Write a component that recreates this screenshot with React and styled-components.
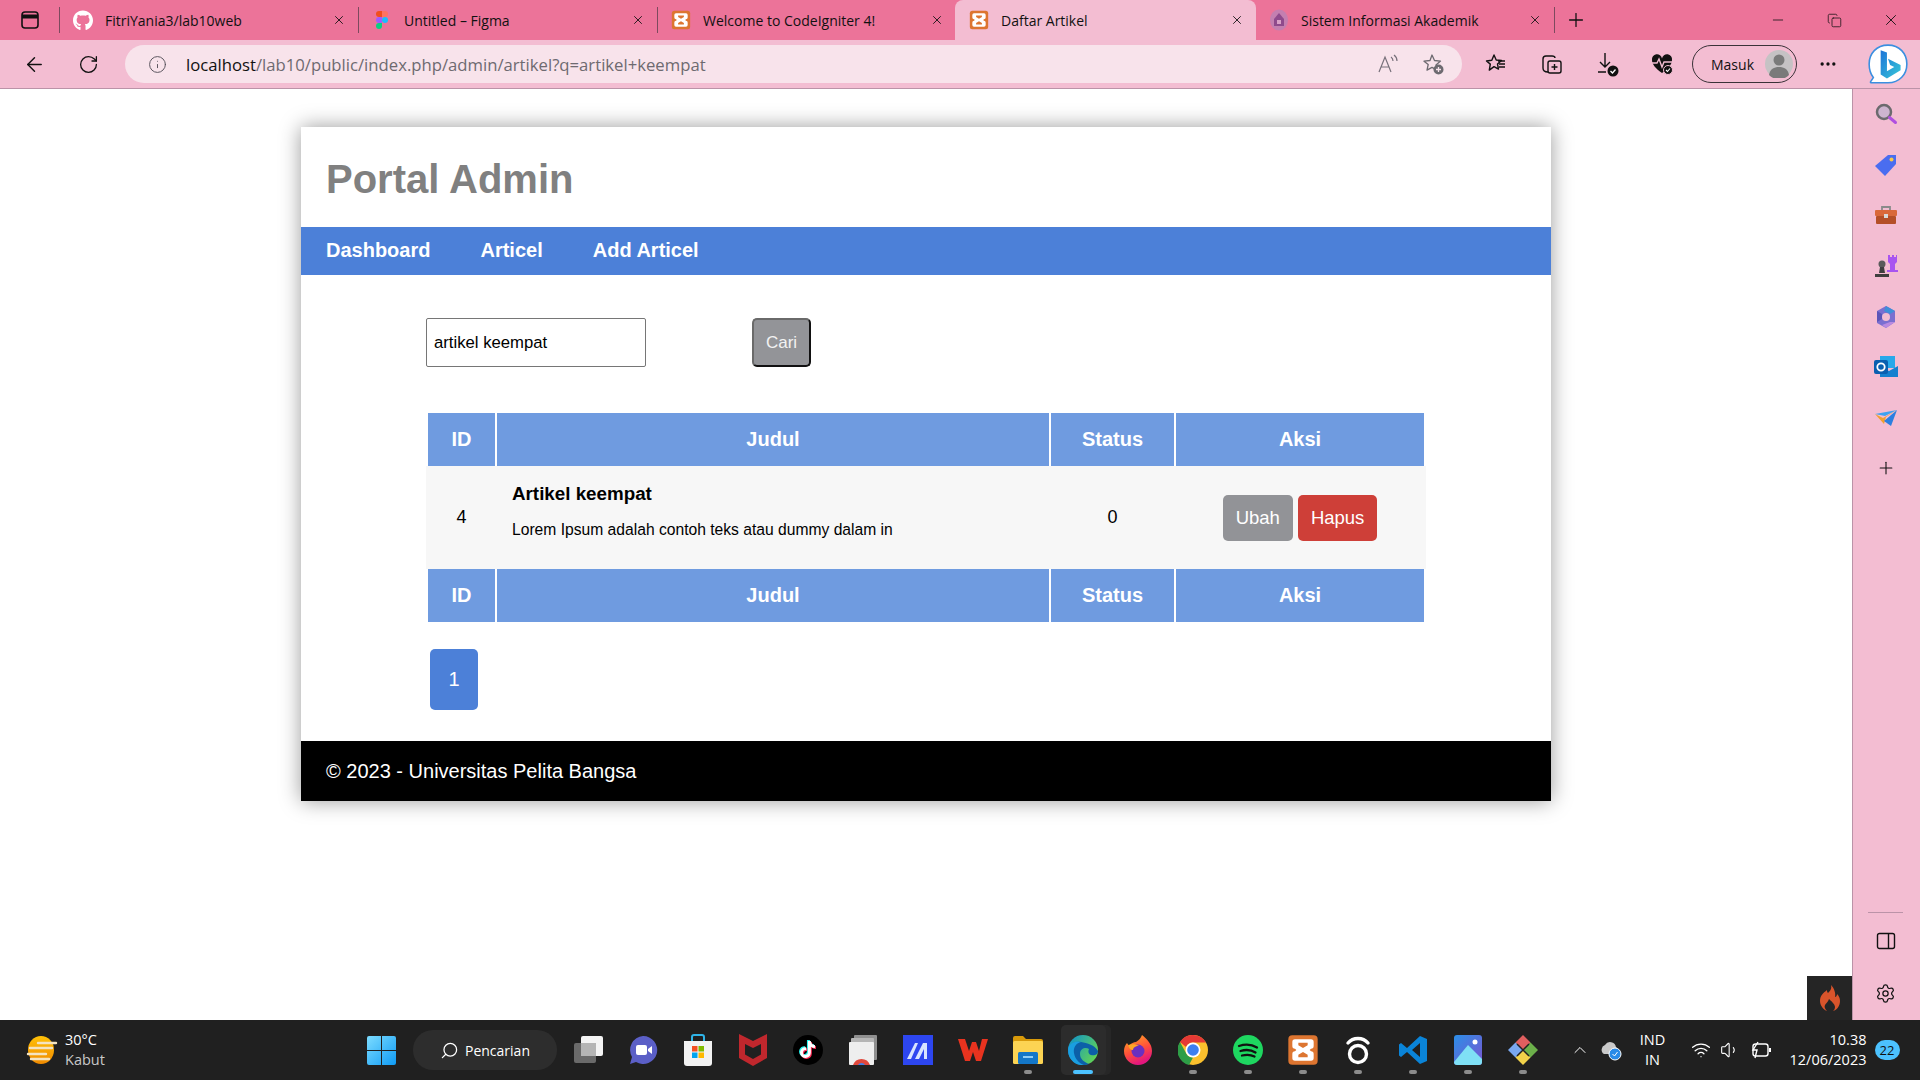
import React from 'react';
import styled, { createGlobalStyle } from 'styled-components';
import {
  ArrowLeft, RotateCw, Info, Plus, Minus, X, Search, ChevronUp, Wifi, Volume1, MoreHorizontal,
  Settings, Copy,
} from 'lucide-react';
import { FaGithub, FaTiktok } from 'react-icons/fa';

const GlobalStyle = createGlobalStyle`
  html, body { margin: 0; padding: 0; height: 100%; overflow: hidden; background: #fff; }
  * { box-sizing: border-box; }
`;

const UI_FONT = `"Open Sans", "Noto Sans", sans-serif`;
const PAGE_FONT = `"Liberation Sans", Arial, sans-serif`;

/* drawn icons */
const Xampp = ({ size = 20 }) => (
  <svg width={size} height={size} viewBox="0 0 24 24">
    <rect x="1" y="1" width="22" height="22" rx="3" fill="#dd7530" />
    <path
      d="M6 4h12a2 2 0 0 1 2 2v3a2 2 0 0 1-2 2l-1 1 1 1a2 2 0 0 1 2 2v3a2 2 0 0 1-2 2H6a2 2 0 0 1-2-2v-3a2 2 0 0 1 2-2l1-1-1-1a2 2 0 0 1-2-2V6a2 2 0 0 1 2-2zM8.500 6.500v2l3.500 2 3.500-2v-2zM8.500 17.500h7v-2l-3.500-2-3.500 2z"
      fill="#fff"
      fillRule="evenodd"
    />
  </svg>
);

const Figma = () => (
  <svg width="12" height="18" viewBox="0 0 16 24">
    <path d="M4 0h4v8H4a4 4 0 0 1 0-8z" fill="#f24e1e" />
    <path d="M8 0h4a4 4 0 0 1 0 8H8z" fill="#ff7262" />
    <path d="M4 8h4v8H4a4 4 0 0 1 0-8z" fill="#a259ff" />
    <circle cx="12" cy="12" r="4" fill="#1abcfe" />
    <path d="M4 16h4v4a4 4 0 1 1-4-4z" fill="#0acf83" />
  </svg>
);

const Campus = () => (
  <svg width="20" height="22" viewBox="0 0 20 22">
    <ellipse cx="10" cy="11" rx="9" ry="10.5" fill="#c47fb0" />
    <path d="M10 4l5 6v7H5v-7z" fill="#8f4a8c" />
    <rect x="8" y="11" width="4" height="4" fill="#d8a0c6" />
  </svg>
);

const SidebarToggle = () => (
  <svg width="20" height="20" viewBox="0 0 20 20" fill="none" stroke="#111" strokeWidth="1.6">
    <rect x="2" y="2" width="16" height="16" rx="3" />
    <path d="M2 6.5h16" strokeWidth="4" />
  </svg>
);

const ReadAloud = () => (
  <svg width="22" height="22" viewBox="0 0 22 22" fill="none" stroke="#77707a" strokeWidth="1.2">
    <path d="M2 19L8 4l6 15M4.5 14h7" />
    <path d="M14 4c1.5 1 2 2.5 2 4M17 2c2 1.5 3 3.5 3 6" />
  </svg>
);

const StarPlus = () => (
  <svg width="24" height="24" viewBox="0 0 24 24" fill="none">
    <path d="M11 3l2.5 5.5 6 .6-4.5 4 1 5-5-2.7-5 2.7 1.2-5.6L3 9.2l6-.7z" stroke="#6d6a70" strokeWidth="1.3" strokeLinejoin="round" />
    <circle cx="17.5" cy="17.5" r="5" fill="#6d6a70" />
    <path d="M17.5 15v5M15 17.5h5" stroke="#f8e3eb" strokeWidth="1.3" />
  </svg>
);

const FavList = () => (
  <svg width="24" height="24" viewBox="0 0 24 24" fill="none" stroke="#111" strokeWidth="1.4" strokeLinejoin="round">
    <path d="M10 3l2.2 5 5.3.5-4 3.6 1 5-4.5-2.5-4.7 3.5 1-6L2.500 9l5.300-.8z" />
    <path d="M15 12h6M15 15h6M14 9h7" />
  </svg>
);

const Collections = () => (
  <svg width="24" height="24" viewBox="0 0 24 24" fill="none" stroke="#111" strokeWidth="1.4">
    <path d="M9 20c-3 0-5-1-5-4V7c0-2 1-3 3-3h6c2 0 3 1 3 2" />
    <rect x="9" y="9" width="13" height="12" rx="2" />
    <path d="M15.500 12v6M12.500 15h6" />
  </svg>
);

const DownloadDone = () => (
  <svg width="24" height="26" viewBox="0 0 24 26" fill="none" stroke="#111" strokeWidth="1.4">
    <path d="M10 2v14M5 11l5 5 5-5M3 21h8" />
    <circle cx="18" cy="20" r="5.500" fill="#111" stroke="none" />
    <path d="M15.500 20l2 2 3-3.500" stroke="#fff" strokeWidth="1.300" />
  </svg>
);

const HeartCheck = () => (
  <svg width="24" height="24" viewBox="0 0 24 24" fill="none">
    <path d="M12 21C5 16 2 12 2 8a5 5 0 0 1 10-1.500A5 5 0 0 1 22 8c0 4-3 8-10 13z" fill="#111" />
    <path d="M1 11h6l2-4 3 8 2-5h9" stroke="#f3bdd2" strokeWidth="1.400" />
    <circle cx="18" cy="18" r="4.500" fill="#111" stroke="#f3bdd2" />
    <path d="M16 18l1.500 1.500 2.500-3" stroke="#fff" strokeWidth="1.100" />
  </svg>
);

const Avatar = () => (
  <svg width="28" height="28" viewBox="0 0 28 28">
    <circle cx="14" cy="14" r="14" fill="#c5c2c4" />
    <circle cx="14" cy="10" r="5.500" fill="#7a7a7a" />
    <path d="M4 25c1-6 5-8 10-8s9 2 10 8a14 14 0 0 1-20 0z" fill="#7a7a7a" />
  </svg>
);

const BingBubble = () => (
  <svg width="42" height="44" viewBox="0 0 40 42">
    <defs>
      <linearGradient id="bingG" x1="0" y1="0" x2="1" y2="1">
        <stop offset="0" stopColor="#1c74d8" />
        <stop offset="1" stopColor="#37c8d8" />
      </linearGradient>
    </defs>
    <path d="M20 2c11 0 18 8 18 18s-7 18-18 18H4c-1 0-1-1 0-2l2-3C3 29 2 25 2 20 2 10 9 2 20 2z" fill="#fff" stroke="#3b8fe0" strokeWidth="1.500" />
    <path d="M13 7l6 2v18l7-4-4-2-2-6 12 6v5l-13 8-6-4z" fill="url(#bingG)" />
  </svg>
);

const SideSearch = () => (
  <svg width="24" height="24" viewBox="0 0 24 24" fill="none">
    <circle cx="10" cy="10" r="7" fill="#cdb4cf" stroke="#6c6a6e" strokeWidth="2.500" />
    <path d="M15.500 15.500l6 5" stroke="#b04fe0" strokeWidth="3" strokeLinecap="round" />
  </svg>
);

const Tag = () => (
  <svg width="24" height="24" viewBox="0 0 24 24">
    <path d="M14 2h8v9L11 23 1 13z" fill="#4a6df0" />
    <circle cx="17.500" cy="6.500" r="2" fill="#f4c94a" />
  </svg>
);

const Toolbox = () => (
  <svg width="24" height="24" viewBox="0 0 24 24">
    <path d="M8 8V4h8v4" fill="none" stroke="#8a8a8a" strokeWidth="1.800" />
    <rect x="1" y="7" width="22" height="6" rx="1" fill="#d9683a" />
    <rect x="2" y="13" width="20" height="8" rx="1" fill="#b44f28" />
    <rect x="10" y="11" width="4" height="4" fill="#d8d8d8" />
  </svg>
);

const Chess = () => (
  <svg width="24" height="24" viewBox="0 0 24 24">
    <path d="M14 1h2v2h2V1h2v2h2V1h1v7l-2 2v6h3v2H13v-2h3v-6l-2-2z" fill="#a855f0" />
    <circle cx="8" cy="10" r="3.500" fill="#5a5a5a" />
    <path d="M6 13h4l1 6H5zM1 20h14v3H1z" fill="#3f3f3f" />
  </svg>
);

const M365 = () => (
  <svg width="22" height="24" viewBox="0 0 22 24">
    <path d="M11 1l9 5v11l-9 6-9-5V6z" fill="#7a6fd0" />
    <path d="M11 1l9 5-5 3-6-3z" fill="#3f8fd8" />
    <path d="M2 6v11l5-3V9z" fill="#5a55b8" />
    <path d="M20 17l-9 6-4-3 8-3z" fill="#b98ae0" />
    <circle cx="11" cy="12" r="4" fill="#f3bdd2" />
  </svg>
);

const Outlook = () => (
  <svg width="24" height="24" viewBox="0 0 24 24">
    <rect x="6" y="1" width="15" height="12" fill="#28a8ea" />
    <path d="M6 12l9 4 9-5v11H6z" fill="#1480cf" />
    <rect x="0" y="5" width="14" height="14" rx="2" fill="#0a5fb0" />
    <circle cx="7" cy="12" r="3.700" fill="none" stroke="#fff" strokeWidth="1.800" />
  </svg>
);

const PaperPlane = () => (
  <svg width="24" height="20" viewBox="0 0 24 20">
    <path d="M1 6l22-4-12 6z" fill="#3fa2f0" />
    <path d="M1 6l8 4 14-8-11 7-2 7z" fill="#f0a030" />
    <path d="M23 2l-6 16-7-5z" fill="#2b7fe0" />
  </svg>
);

const PanelIcon = () => (
  <svg width="20" height="18" viewBox="0 0 20 18" fill="none" stroke="#111" strokeWidth="1.400">
    <rect x="1.500" y="1.500" width="17" height="15" rx="2" />
    <path d="M12.500 1.500v15" />
  </svg>
);

const Flame = () => (
  <svg width="22" height="26" viewBox="0 0 22 26">
    <path d="M12 0c1 4-1 6-3 8-1-1-1-2-1-3C4 8 1 11 1 16c0 5 4 9 7 10-2-2-3-4-2-6 1-2 3-3 4-6 2 2 6 5 6 8 0 2-1 3-2 4 4-1 7-5 7-10 0-3-1-5-3-7 0 2-1 3-2 3 1-4-1-9-4-12z" fill="#d9542b" />
  </svg>
);

const WeatherIcon = () => (
  <svg width="34" height="30" viewBox="0 0 34 30">
    <defs>
      <linearGradient id="sunG" x1="0" y1="0" x2="0" y2="1">
        <stop offset="0" stopColor="#ffc107" />
        <stop offset="1" stopColor="#f08a00" />
      </linearGradient>
    </defs>
    <ellipse cx="17" cy="15" rx="13" ry="14" fill="url(#sunG)" />
    <path d="M14 8h18M6 13h22M4 19h18M7 24h18" stroke="#f4e3c0" strokeWidth="2.400" strokeLinecap="round" />
  </svg>
);

const WinLogo = () => (
  <svg width="29" height="29" viewBox="0 0 29 29">
    <defs>
      <linearGradient id="winG" x1="0" y1="0" x2="1" y2="1">
        <stop offset="0" stopColor="#7ddcff" />
        <stop offset="1" stopColor="#0f9bf5" />
      </linearGradient>
    </defs>
    <path d="M0 2a2 2 0 0 1 2-2h12v14H0zM15 0h12a2 2 0 0 1 2 2v12H15zM0 15h14v14H2a2 2 0 0 1-2-2zM15 15h14v12a2 2 0 0 1-2 2H15z" fill="url(#winG)" />
  </svg>
);

const TaskView = () => (
  <svg width="30" height="30" viewBox="0 0 30 30">
    <rect x="1" y="8" width="22" height="20" rx="2" fill="#6a6a6a" />
    <rect x="8" y="1" width="22" height="20" rx="2" fill="#f4f4f4" />
    <rect x="8" y="8" width="15" height="13" fill="#b5b5b5" />
  </svg>
);

const Meet = () => (
  <svg width="30" height="30" viewBox="0 0 30 30">
    <path d="M15 1a14 14 0 1 1-7 26l-6 2 2-7A14 14 0 0 1 15 1z" fill="#5b5fc7" />
    <rect x="8" y="10" width="11" height="10" rx="2" fill="#fff" />
    <path d="M20 14l4-3v8l-4-3z" fill="#fff" />
  </svg>
);

const Store = () => (
  <svg width="30" height="32" viewBox="0 0 30 32">
    <path d="M9 7V3a2 2 0 0 1 2-2h8a2 2 0 0 1 2 2v4" fill="none" stroke="#2fb4e8" strokeWidth="2" />
    <path d="M1 7h28v22a3 3 0 0 1-3 3H4a3 3 0 0 1-3-3z" fill="#f2f2f2" />
    <rect x="9" y="12" width="5.500" height="5.500" fill="#f25022" />
    <rect x="15.500" y="12" width="5.500" height="5.500" fill="#7fba00" />
    <rect x="9" y="18.500" width="5.500" height="5.500" fill="#00a4ef" />
    <rect x="15.500" y="18.500" width="5.500" height="5.500" fill="#ffb900" />
  </svg>
);

const McAfee = () => (
  <svg width="28" height="32" viewBox="0 0 28 32">
    <path d="M0 0l14 7 14-7v24l-14 8L0 24zM6 10v10.500l8 4.500 8-4.500V10l-8 4z" fill="#c0272d" fillRule="evenodd" />
  </svg>
);

const TikTok = () => (
  <Disc>
    <TikLayer $color="#25f4ee" $x={-1} $y={-1}><FaTiktok size={17} /></TikLayer>
    <TikLayer $color="#fe2c55" $x={1} $y={1}><FaTiktok size={17} /></TikLayer>
    <TikLayer $color="#fff" $x={0} $y={0}><FaTiktok size={17} /></TikLayer>
  </Disc>
);

const ChromeApps = () => (
  <svg width="30" height="32" viewBox="0 0 30 32">
    <rect x="6" y="1" width="23" height="25" rx="1" fill="#8f8f8f" />
    <rect x="3" y="4" width="23" height="25" rx="1" fill="#b5b5b5" />
    <rect x="1" y="8" width="25" height="23" rx="1" fill="#eee" />
    <path d="M5 31a9 9 0 0 1 17 0z" fill="#e0483c" />
    <path d="M10 31a4 4 0 0 1 7 0z" fill="#3f80e8" />
  </svg>
);

const BlueM = () => (
  <svg width="30" height="30" viewBox="0 0 30 30">
    <rect width="30" height="30" fill="#2d46f0" />
    <path d="M4 24L12 8h3L8 24zM12 24l8-16h4v16h-3V14l-5 10z" fill="#d8e4ff" />
  </svg>
);

const Wps = () => (
  <svg width="30" height="26" viewBox="0 0 30 26">
    <path d="M0 2h7l4 12 3-9h4l3 9 3-12h6l-7 22h-5l-3-9-3 9h-5z" fill="#e8331f" />
  </svg>
);

const Folder = () => (
  <svg width="30" height="28" viewBox="0 0 30 28">
    <path d="M0 2a2 2 0 0 1 2-2h8l3 3h15a2 2 0 0 1 2 2v3H0z" fill="#d89a0a" />
    <rect y="5" width="30" height="23" rx="1.500" fill="#fcd453" />
    <rect x="5" y="16" width="20" height="12" rx="1.500" fill="#1477c8" />
    <rect x="10" y="20" width="10" height="2" fill="#8fcdf5" />
  </svg>
);

const Edge = () => (
  <svg width="30" height="30" viewBox="0 0 30 30">
    <defs>
      <linearGradient id="edgeG" x1="0" y1="0" x2="1" y2="0.6">
        <stop offset="0" stopColor="#0c8fd0" />
        <stop offset="1" stopColor="#5fd158" />
      </linearGradient>
    </defs>
    <circle cx="15" cy="15" r="15" fill="url(#edgeG)" />
    <path d="M30 16c0 4-4 5-7 4-3-1-3-4-2-6-3-2-9-1-9 5 0 5 4 8 9 10a15 15 0 0 1-9 1C5 28 0 22 0 15 2 8 8 6 13 7c6 1 14 3 17 9z" fill="#0c5fa8" />
    <path d="M0 15C0 9 7 5 13 7c-5 1-8 6-7 11 1 6 5 10 10 12C7 31 0 24 0 15z" fill="#1a9ee0" />
  </svg>
);

const Firefox = () => (
  <svg width="30" height="30" viewBox="0 0 30 30">
    <defs>
      <linearGradient id="ffG" x1="0" y1="0" x2="0.4" y2="1">
        <stop offset="0" stopColor="#ffb022" />
        <stop offset="0.6" stopColor="#ff4f3a" />
        <stop offset="1" stopColor="#e3167f" />
      </linearGradient>
    </defs>
    <path d="M15 30A14 14 0 0 1 1 16c0-3 1-6 3-8l2 3c2-3 5-4 7-4 3-2 5-4 6-7 5 4 10 9 10 16a14 14 0 0 1-14 14z" fill="url(#ffG)" />
    <circle cx="15" cy="16" r="6.500" fill="#6b2fc0" />
    <path d="M5 10c3-1 8-1 11 1-4 0-6 2-6 4-3 0-4-2-5-5z" fill="#ffa726" />
  </svg>
);

const Chrome = () => (
  <svg width="30" height="30" viewBox="0 0 30 30">
    <circle cx="15" cy="15" r="15" fill="#fbc02d" />
    <path d="M15 0a15 15 0 0 1 13 7.500H15a7.500 7.500 0 0 0-7 4.500L2 7A15 15 0 0 1 15 0z" fill="#e53935" />
    <path d="M2 7l6.500 12a7.500 7.500 0 0 0 6.500 3.500L11 30A15 15 0 0 1 2 7z" fill="#2e9e47" />
    <circle cx="15" cy="15" r="7.500" fill="#fff" />
    <circle cx="15" cy="15" r="5.800" fill="#3d7ff0" />
  </svg>
);

const Spotify = () => (
  <svg width="30" height="30" viewBox="0 0 30 30" fill="none">
    <circle cx="15" cy="15" r="15" fill="#1ed760" />
    <path d="M6 11c6-2 13-1.500 18 1.500M7.500 16c5-1.500 11-1 15 1.500M9 20.500c4-1 9-.8 12.500 1" stroke="#111" strokeWidth="2.300" strokeLinecap="round" />
  </svg>
);

const Copilot = () => (
  <svg width="26" height="30" viewBox="0 0 26 30" fill="none" stroke="#fff" strokeWidth="3.400">
    <circle cx="13" cy="19" r="8.500" />
    <path d="M3 8c5-6 15-6 20 0" strokeLinecap="round" />
  </svg>
);

const VsCode = () => (
  <svg width="30" height="30" viewBox="0 0 30 30">
    <path d="M22 1l7 3v22l-7 3L9 17l-6 5-2-1.500v-11L3 8l6 5zm0 7l-8 7 8 7z" fill="#0a84d8" fillRule="evenodd" />
  </svg>
);

const Photos = () => (
  <svg width="28" height="30" viewBox="0 0 28 30">
    <defs>
      <linearGradient id="phG" x1="0" y1="0" x2="1" y2="1">
        <stop offset="0" stopColor="#2b8fe8" />
        <stop offset="1" stopColor="#7a55d0" />
      </linearGradient>
    </defs>
    <rect width="28" height="30" rx="3" fill="url(#phG)" />
    <path d="M0 27L14 10l14 14v3a3 3 0 0 1-3 3H3a3 3 0 0 1-3-3z" fill="#7fe0f5" />
    <circle cx="21" cy="7" r="2.500" fill="#fff" />
  </svg>
);

const GitGui = () => (
  <svg width="30" height="30" viewBox="0 0 30 30">
    <path d="M15 0l7.500 7.500L15 15 7.500 7.500z" fill="#e05f5f" />
    <path d="M22.500 7.500L30 15l-7.500 7.500L15 15z" fill="#6cb04a" />
    <path d="M7.500 7.500L15 15l-7.500 7.500L0 15z" fill="#7aa8f0" />
    <path d="M15 15l7.500 7.500L15 30l-7.500-7.500z" fill="#f2d24a" />
    <path d="M9 9l12 12M21 9L9 21" stroke="#222" strokeWidth="1.500" />
  </svg>
);

const CloudSync = () => (
  <svg width="24" height="22" viewBox="0 0 24 22">
    <path d="M5 15a5 5 0 0 1 1-9 6 6 0 0 1 11 2 4 4 0 0 1 0 7z" fill="#c9c9c9" />
    <circle cx="16" cy="15" r="6" fill="#2a8be8" stroke="#fff" />
    <path d="M13.500 15l2 2 3-4" stroke="#fff" fill="none" />
  </svg>
);

const Battery = () => (
  <svg width="22" height="18" viewBox="0 0 22 18" fill="none" stroke="#fff" strokeWidth="1.400">
    <rect x="3" y="3" width="15" height="12" rx="2.500" />
    <path d="M20 7v4" strokeWidth="2" />
    <path d="M8 1L3 9h4l-2 8" />
  </svg>
);

/* data */
const tabs = [
  { title: 'FitriYania3/lab10web', icon: <FaGithub size={21} color="#fff" /> },
  { title: 'Untitled – Figma', icon: <Figma /> },
  { title: 'Welcome to CodeIgniter 4!', icon: <Xampp /> },
  { title: 'Daftar Artikel', icon: <Xampp />, active: true },
  { title: 'Sistem Informasi Akademik', icon: <Campus /> },
];

const sideApps = [<SideSearch />, <Tag />, <Toolbox />, <Chess />, <M365 />, <Outlook />, <PaperPlane />];

const taskApps = [
  { icon: <TaskView /> },
  { icon: <Meet /> },
  { icon: <Store /> },
  { icon: <McAfee /> },
  { icon: <TikTok /> },
  { icon: <ChromeApps /> },
  { icon: <BlueM /> },
  { icon: <Wps /> },
  { icon: <Folder />, open: true },
  { icon: <Edge />, active: true },
  { icon: <Firefox /> },
  { icon: <Chrome />, open: true },
  { icon: <Spotify />, open: true },
  { icon: <Xampp size={32} />, open: true },
  { icon: <Copilot />, open: true },
  { icon: <VsCode />, open: true },
  { icon: <Photos />, open: true },
  { icon: <GitGui />, open: true },
];

const columns = ['ID', 'Judul', 'Status', 'Aksi'];

export default function App() {
  const headerRow = (
    <tr>
      {columns.map((c) => <HeadCell key={c}>{c}</HeadCell>)}
    </tr>
  );

  return (
    <Screen>
      <GlobalStyle />
      <TabBar>
        <TabToggle><SidebarToggle /></TabToggle>
        {tabs.map((t) => (
          <Tab key={t.title} $active={t.active}>
            <TabIcon>{t.icon}</TabIcon>
            <TabTitle>{t.title}</TabTitle>
            <X size={14} strokeWidth={1.5} color="#111" />
          </Tab>
        ))}
        <NewTab><Plus size={22} strokeWidth={1.4} color="#111" /></NewTab>
        <WindowControls>
          <Minus size={16} strokeWidth={1.2} color="#111" />
          <Copy size={15} strokeWidth={1.2} color="#111" />
          <X size={18} strokeWidth={1.2} color="#111" />
        </WindowControls>
      </TabBar>

      <Toolbar>
        <NavButton><ArrowLeft size={23} strokeWidth={1.5} color="#111" /></NavButton>
        <NavButton><RotateCw size={21} strokeWidth={1.5} color="#111" /></NavButton>
        <AddressBar>
          <Info size={19} strokeWidth={1.2} color="#55505a" />
          <Url><UrlHost>localhost</UrlHost>/lab10/public/index.php/admin/artikel?q=artikel+keempat</Url>
          <AddressActions>
            <ReadAloud />
            <StarPlus />
          </AddressActions>
        </AddressBar>
        <ToolIcons>
          <FavList />
          <Collections />
          <DownloadDone />
          <HeartCheck />
        </ToolIcons>
        <ProfilePill>
          <span>Masuk</span>
          <Avatar />
        </ProfilePill>
        <MoreButton><MoreHorizontal size={20} strokeWidth={2} color="#111" /></MoreButton>
        <BingSlot><BingBubble /></BingSlot>
      </Toolbar>

      <Body>
        <Page>
          <Container>
            <SiteHeader><h1>Portal Admin</h1></SiteHeader>
            <SiteNav>
              <NavLink href="#">Dashboard</NavLink>
              <NavLink href="#">Articel</NavLink>
              <NavLink href="#">Add Articel</NavLink>
            </SiteNav>
            <Content>
              <SearchForm>
                <SearchInput defaultValue="artikel keempat" />
                <SearchButton type="button">Cari</SearchButton>
              </SearchForm>
              <DataTable>
                <colgroup>
                  <col width="69" />
                  <col width="554" />
                  <col width="125" />
                  <col width="252" />
                </colgroup>
                <thead>{headerRow}</thead>
                <tbody>
                  <tr>
                    <ValueCell>4</ValueCell>
                    <TitleCell>
                      <ArticleTitle>Artikel keempat</ArticleTitle>
                      <ArticleText>Lorem Ipsum adalah contoh teks atau dummy dalam in</ArticleText>
                    </TitleCell>
                    <ValueCell>0</ValueCell>
                    <ActionCell>
                      <ActionGroup>
                        <ActionButton $color="#929397">Ubah</ActionButton>
                        <ActionButton $color="#ce3f38">Hapus</ActionButton>
                      </ActionGroup>
                    </ActionCell>
                  </tr>
                </tbody>
                <tfoot>{headerRow}</tfoot>
              </DataTable>
              <Pager><PageLink>1</PageLink></Pager>
            </Content>
            <SiteFooter>© 2023 - Universitas Pelita Bangsa</SiteFooter>
          </Container>
          <DebugFlame><Flame /></DebugFlame>
        </Page>

        <SidePanel>
          <SideList>
            {sideApps.map((icon, i) => <SideItem key={i}>{icon}</SideItem>)}
            <SideItem><Plus size={20} strokeWidth={1.3} color="#111" /></SideItem>
          </SideList>
          <SideBottom>
            <SideRule />
            <PanelIcon />
            <Settings size={21} strokeWidth={1.4} color="#111" />
          </SideBottom>
        </SidePanel>
      </Body>

      <Taskbar>
        <Weather>
          <WeatherIcon />
          <WeatherText>
            <span>30°C</span>
            <WeatherSub>Kabut</WeatherSub>
          </WeatherText>
        </Weather>
        <StartSlot><WinLogo /></StartSlot>
        <SearchPill>
          <SearchGlyph><Search size={19} strokeWidth={1.6} color="#fff" /></SearchGlyph>
          <span>Pencarian</span>
        </SearchPill>
        <AppStrip>
          {taskApps.map((a, i) => (
            <AppSlot key={i} $active={a.active}>
              {a.icon}
              {a.open && <AppDot />}
              {a.active && <AppBar />}
            </AppSlot>
          ))}
        </AppStrip>
        <Tray>
          <ChevronUp size={20} strokeWidth={1.2} color="#fff" />
          <CloudWrap><CloudSync /></CloudWrap>
          <LangBox>
            <span>IND</span>
            <span>IN</span>
          </LangBox>
          <TrayIcons>
            <Wifi size={20} strokeWidth={1.6} color="#fff" />
            <Volume1 size={20} strokeWidth={1.3} color="#fff" />
            <Battery />
          </TrayIcons>
          <Clock>
            <span>10.38</span>
            <span>12/06/2023</span>
          </Clock>
          <NotifyBadge>22</NotifyBadge>
        </Tray>
      </Taskbar>
    </Screen>
  );
}

const Screen = styled.div`
  width: 1920px;
  height: 1080px;
  display: flex;
  flex-direction: column;
  overflow: hidden;
  font-family: ${UI_FONT};
`;

/* tab strip */
const TabBar = styled.div`
  height: 40px;
  flex-shrink: 0;
  display: flex;
  align-items: stretch;
  background: #ec7399;
  font-size: 14px;
  color: #111;
`;

const TabToggle = styled.div`
  width: 60px;
  padding-left: 20px;
  display: flex;
  align-items: center;
  border-right: 1px solid #7d4a5e;
  margin: 7px 0;
`;

const Tab = styled.div`
  width: ${(p) => (p.$active ? '301px' : '299px')};
  margin: ${(p) => (p.$active ? '0 0 0 -2px' : '7px 0')};
  display: flex;
  align-items: center;
  padding: 0 12px 0 ${(p) => (p.$active ? '14px' : '13px')};
  background: ${(p) => (p.$active ? '#f3bdd2' : 'transparent')};
  border-radius: ${(p) => (p.$active ? '8px 8px 0 0' : '0')};
  border-right: ${(p) => (p.$active ? 'none' : '1px solid #7d4a5e')};
`;

const TabIcon = styled.div`
  width: 20px;
  height: 24px;
  display: flex;
  align-items: center;
  justify-content: center;
  margin-right: 12px;
`;

const TabTitle = styled.div`
  flex: 1;
  white-space: nowrap;
  overflow: hidden;
`;

const NewTab = styled.div`
  width: 42px;
  display: flex;
  align-items: center;
  justify-content: center;
`;

const WindowControls = styled.div`
  margin-left: auto;
  width: 170px;
  padding: 0 20px 0 20px;
  display: flex;
  align-items: center;
  justify-content: space-between;
`;

/* browser toolbar */
const Toolbar = styled.div`
  height: 49px;
  flex-shrink: 0;
  display: flex;
  align-items: center;
  background: #f3bdd2;
  border-bottom: 1px solid #bb93a8;
  padding-left: 23px;
`;

const NavButton = styled.div`
  width: 55px;
  display: flex;
  align-items: center;
`;

const AddressBar = styled.div`
  width: 1337px;
  height: 38px;
  margin-left: -8px;
  border-radius: 19px;
  background: #f8e3eb;
  display: flex;
  align-items: center;
  padding-left: 23px;
`;

const Url = styled.div`
  margin-left: 19px;
  font-size: 16.700px;
  color: #6e6a70;
  white-space: nowrap;
`;

const UrlHost = styled.span`
  color: #111;
`;

const AddressActions = styled.div`
  margin-left: auto;
  width: 85px;
  padding-right: 17px;
  display: flex;
  justify-content: space-between;
  align-items: center;
`;

const ToolIcons = styled.div`
  width: 232px;
  padding: 0 20px 0 22px;
  display: flex;
  justify-content: space-between;
  align-items: center;
`;

const ProfilePill = styled.div`
  width: 105px;
  height: 38px;
  margin-left: -2px;
  border: 1.500px solid #3a3238;
  border-radius: 19px;
  display: flex;
  align-items: center;
  justify-content: space-between;
  padding: 0 3px 0 18px;
  font-size: 14px;
  color: #111;
`;

const MoreButton = styled.div`
  width: 62px;
  display: flex;
  justify-content: center;
`;

const BingSlot = styled.div`
  width: 42px;
  height: 44px;
  margin-left: 8px;
  margin-top: 2px;
`;

/* page */
const Body = styled.div`
  flex: 1;
  min-height: 0;
  display: flex;
`;

const Page = styled.div`
  position: relative;
  flex: 1;
  background: #fff;
  padding-top: 38px;
  border-right: 1px solid #bb93a8;
`;

const Container = styled.div`
  width: 1250px;
  margin: 0 auto;
  background: #fff;
  box-shadow: 0 0 20px rgba(0, 0, 0, 0.4);
  font-family: ${PAGE_FONT};
`;

const SiteHeader = styled.header`
  height: 100px;
  padding: 31px 25px 0;
  h1 {
    margin: 0;
    font-size: 40px;
    line-height: 42px;
    color: #808080;
    font-weight: bold;
  }
`;

const SiteNav = styled.nav`
  height: 48px;
  padding-bottom: 2px;
  display: flex;
  align-items: center;
  background: #4c80d8;
`;

const NavLink = styled.a`
  padding: 0 25px;
  color: #fff;
  font-size: 20px;
  font-weight: bold;
  text-decoration: none;
`;

const Content = styled.main`
  padding: 43px 0 31px 125px;
`;

const SearchForm = styled.form`
  display: flex;
  gap: 106px;
  margin: 0 0 46px;
`;

const SearchInput = styled.input`
  width: 220px;
  height: 49px;
  padding: 0 7px;
  border: 1px solid #767676;
  border-radius: 2px;
  font-family: ${PAGE_FONT};
  font-size: 16.700px;
  color: #000;
  background: #fff;
`;

const SearchButton = styled.button`
  width: 59px;
  height: 49px;
  padding: 0;
  background: #939498;
  border: 2px solid;
  border-color: #6a6a6a #111 #111 #6a6a6a;
  border-radius: 5px;
  color: #f2f2f2;
  font-family: ${PAGE_FONT};
  font-size: 17px;
`;

const DataTable = styled.table`
  width: 1000px;
  table-layout: fixed;
  border-collapse: separate;
  border-spacing: 0;
  background: #f7f7f7;
`;

const HeadCell = styled.th`
  height: 53px;
  padding: 0;
  background: #6f9be0;
  background-clip: padding-box;
  border-left: 2px solid #fff;
  color: #fff;
  font-size: 20px;
  font-weight: bold;
  text-align: center;
  &:last-child { border-right: 2px solid #fff; }
`;

const ValueCell = styled.td`
  padding: 0 0 0 2px;
  height: 103px;
  text-align: center;
  font-size: 18px;
  color: #000;
`;

const ActionCell = styled.td`
  padding: 0;
  text-align: center;
`;

const TitleCell = styled.td`
  padding: 17px 17px 0;
  vertical-align: top;
`;

const ArticleTitle = styled.h3`
  margin: 0;
  font-size: 18.800px;
  line-height: 22px;
  color: #000;
`;

const ArticleText = styled.p`
  margin: 16px 0 0;
  font-size: 15.650px;
  line-height: 18px;
  color: #000;
`;

const ActionGroup = styled.div`
  display: inline-flex;
  gap: 5px;
  vertical-align: middle;
`;

const ActionButton = styled.a`
  height: 46px;
  padding: 0 13px;
  display: flex;
  align-items: center;
  border-radius: 5px;
  background: ${(p) => p.$color};
  color: #fff;
  font-size: 18.500px;
`;

const Pager = styled.div`
  margin: 27px 0 0 4px;
  display: flex;
`;

const PageLink = styled.a`
  width: 48px;
  height: 61px;
  display: flex;
  align-items: center;
  justify-content: center;
  border-radius: 5px;
  background: #4c80d8;
  color: #fff;
  font-size: 20px;
`;

const SiteFooter = styled.footer`
  height: 60px;
  padding: 0 25px;
  display: flex;
  align-items: center;
  background: #000;
  color: #fff;
  font-size: 20px;
`;

const DebugFlame = styled.div`
  position: absolute;
  right: 0;
  bottom: 0;
  width: 45px;
  height: 44px;
  display: flex;
  align-items: center;
  justify-content: center;
  background: #252525;
`;

/* right sidebar */
const SidePanel = styled.aside`
  width: 67px;
  flex-shrink: 0;
  padding-right: 2px;
  background: #f3bdd2;
  display: flex;
  flex-direction: column;
  justify-content: space-between;
`;

const SideList = styled.div`
  display: flex;
  flex-direction: column;
`;

const SideItem = styled.div`
  height: 50.600px;
  display: flex;
  align-items: center;
  justify-content: center;
`;

const SideBottom = styled.div`
  display: flex;
  flex-direction: column;
  align-items: center;
  padding-bottom: 16px;
  gap: 33px;
`;

const SideRule = styled.div`
  width: 35px;
  height: 1px;
  margin-bottom: -14px;
  background: #bb93a8;
`;

/* windows taskbar */
const Taskbar = styled.div`
  height: 60px;
  flex-shrink: 0;
  display: flex;
  align-items: center;
  background: #202020;
  color: #fff;
  font-size: 14px;
`;

const Weather = styled.div`
  width: 353px;
  padding-left: 24px;
  display: flex;
  align-items: center;
  gap: 7px;
`;

const WeatherText = styled.div`
  display: flex;
  flex-direction: column;
  line-height: 20px;
  font-size: 14.500px;
`;

const WeatherSub = styled.span`
  color: #c8c8c8;
`;

const StartSlot = styled.div`
  width: 60px;
  display: flex;
  justify-content: center;
  margin-left: -2px;
`;

const SearchPill = styled.div`
  width: 144px;
  height: 40px;
  margin-left: 2px;
  border-radius: 20px;
  background: #2d2d2d;
  display: flex;
  align-items: center;
  justify-content: center;
  gap: 6px;
`;

const SearchGlyph = styled.span`
  display: flex;
  transform: scaleX(-1);
`;

const AppStrip = styled.div`
  margin-left: 3.500px;
  display: flex;
  align-items: center;
`;

const AppSlot = styled.div`
  position: relative;
  width: 55px;
  height: 50px;
  display: flex;
  align-items: center;
  justify-content: center;
  ${(p) => p.$active && `
    background: #2c2c2c;
    border-radius: 5px;
    box-shadow: 5px 0 0 #272727;
    width: 45px;
    margin: 0 5px;
  `}
`;

const AppDot = styled.span`
  position: absolute;
  left: 50%;
  bottom: 1px;
  width: 8px;
  height: 4px;
  margin-left: -4px;
  border-radius: 2px;
  background: #8c8c8c;
`;

const AppBar = styled.span`
  position: absolute;
  left: 50%;
  bottom: 1px;
  width: 20px;
  height: 4px;
  margin-left: -10px;
  border-radius: 2px;
  background: #4cc2ff;
`;

const Disc = styled.div`
  position: relative;
  width: 30px;
  height: 30px;
  border-radius: 50%;
  background: #000;
`;

const TikLayer = styled.span`
  position: absolute;
  left: ${(p) => 6 + p.$x}px;
  top: ${(p) => 6 + p.$y}px;
  line-height: 0;
  color: ${(p) => p.$color};
`;

const Tray = styled.div`
  margin-left: 19px;
  flex: 1;
  display: flex;
  align-items: center;
`;

const CloudWrap = styled.span`
  display: flex;
  margin-left: 9px;
`;

const LangBox = styled.div`
  width: 40px;
  margin-left: 10px;
  display: flex;
  flex-direction: column;
  align-items: center;
  font-size: 14.500px;
  line-height: 20px;
`;

const TrayIcons = styled.div`
  width: 81px;
  margin-left: 18px;
  display: flex;
  align-items: center;
  justify-content: space-between;
`;

const Clock = styled.div`
  width: 95px;
  display: flex;
  flex-direction: column;
  align-items: flex-end;
  line-height: 20px;
  font-size: 14.500px;
`;

const NotifyBadge = styled.div`
  width: 25px;
  height: 20px;
  margin-left: 8px;
  border-radius: 10px;
  background: #4cc2ff;
  color: #111;
  font-size: 13px;
  display: flex;
  align-items: center;
  justify-content: center;
`;
